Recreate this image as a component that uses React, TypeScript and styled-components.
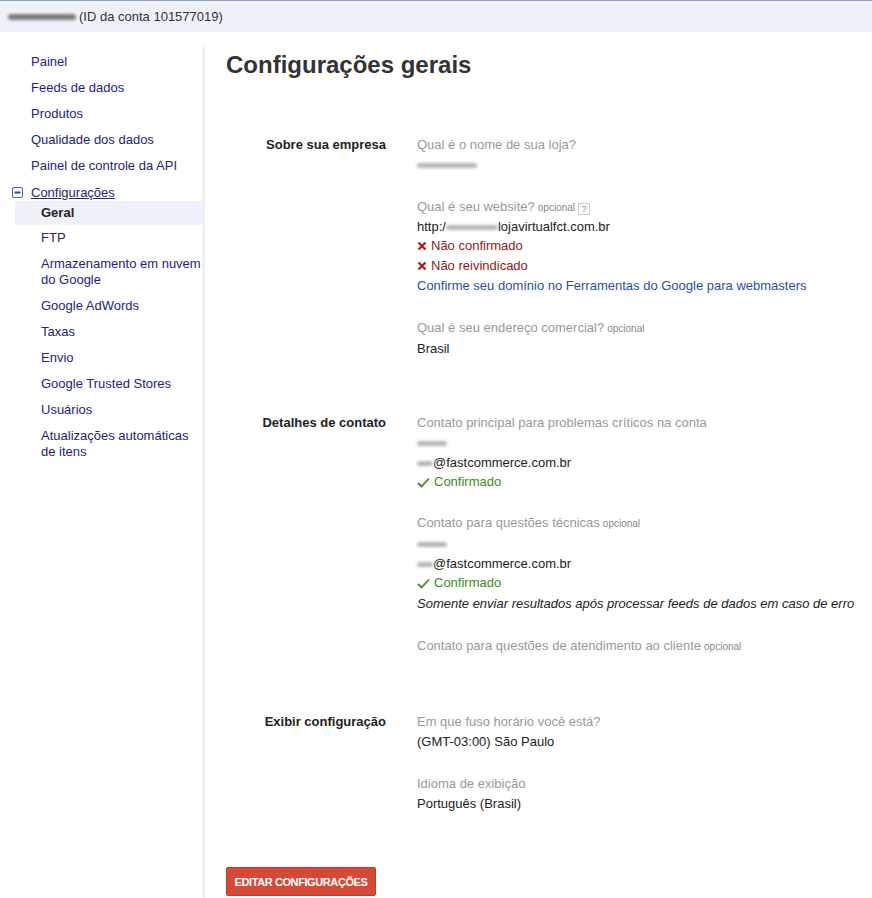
import React from 'react';
import styled, { createGlobalStyle } from 'styled-components';

const GlobalStyle = createGlobalStyle`
  html, body {
    margin: 0;
    padding: 0;
    background: #fff;
  }
  body {
    font-family: "Liberation Sans", Arial, sans-serif;
    font-size: 13px;
    color: #222;
  }
`;

const Page = styled.div`
  min-height: 100vh;
  display: flex;
  flex-direction: column;
`;

const TopBar = styled.div`
  height: 31px;
  border-top: 1px solid #8aa4c8;
  background: #eef1f9;
  display: flex;
  align-items: center;
  padding-left: 8px;
  gap: 3px;
  font-size: 13px;
  color: #333;
`;

const Blur = styled.span<{ w: number; h?: number; dark?: boolean }>`
  display: inline-block;
  width: ${(p) => p.w}px;
  height: ${(p) => p.h ?? 5}px;
  border-radius: 3px;
  background: ${(p) => (p.dark ? '#7a7a7a' : '#b5b5b5')};
  filter: blur(1.6px);
  vertical-align: middle;
`;

const Body = styled.div`
  flex: 1;
  display: flex;
  margin-top: 13px;
`;

const Sidebar = styled.nav`
  width: 205px;
  border-right: 3px solid #eceff6;
  padding: 6px 0 0 15px;
  box-sizing: border-box;
  flex-shrink: 0;
`;

const NavItem = styled.a<{ sub?: boolean; active?: boolean }>`
  display: block;
  padding: ${(p) => (p.active ? '4px' : '3px')} 0 ${(p) => (p.active ? '4px' : '3px')} ${(p) => (p.sub ? 26 : 16)}px;
  line-height: 16px;
  margin-bottom: ${(p) => (p.active ? '2px' : '4px')};
  color: ${(p) => (p.active ? '#222' : '#23237a')};
  font-weight: ${(p) => (p.active ? 'bold' : 'normal')};
  background: ${(p) => (p.active ? '#eef1f9' : 'transparent')};
  text-decoration: none;
  cursor: pointer;
`;

const GroupHead = styled.div`
  display: flex;
  align-items: center;
  gap: 8px;
  margin-left: -3px;
  line-height: 16px;
  padding-top: 3px;
  height: 20px;
  box-sizing: border-box;
  color: #23237a;
  a {
    color: #23237a;
    text-decoration: underline;
  }
`;

const Main = styled.main`
  flex: 1;
  padding: 6px 0 0 21px;
`;

const Title = styled.h1`
  margin: 0 0 56px;
  font-size: 24px;
  line-height: 28px;
  font-weight: bold;
  color: #333;
`;

const Section = styled.section`
  display: grid;
  grid-template-columns: 160px 1fr;
  column-gap: 31px;
  margin-bottom: 32px;
`;

const SectionLabel = styled.div`
  text-align: right;
  font-weight: bold;
  color: #222;
  line-height: 20px;
`;

const Field = styled.div`
  margin-bottom: 22px;
`;

const FieldLabel = styled.div`
  color: #999;
  line-height: 20px;
`;

const EmptyValue = styled.div`
  height: 1px;
`;

const Optional = styled.span`
  font-size: 10px;
  color: #888;
  margin-left: 3px;
`;

const Help = styled.span`
  display: inline-block;
  width: 10px;
  height: 10px;
  border: 1px solid #ccc;
  font-size: 9px;
  line-height: 10px;
  text-align: center;
  color: #888;
  margin-left: 3px;
  vertical-align: -1px;
`;

const Value = styled.div<{ italic?: boolean; compact?: boolean }>`
  line-height: ${(p) => (p.compact ? 18 : 20)}px;
  margin-top: ${(p) => (p.italic ? 2 : 0)}px;
  color: #222;
  font-style: ${(p) => (p.italic ? 'italic' : 'normal')};
  white-space: nowrap;
`;

const Status = styled.div<{ ok?: boolean }>`
  line-height: ${(p) => (p.ok ? 18 : 20)}px;
  color: ${(p) => (p.ok ? '#3d8a22' : '#8e1a1a')};
  display: flex;
  align-items: center;
  gap: 4px;
`;

const Link = styled.a`
  display: block;
  line-height: 20px;
  color: #2a4f9f;
  text-decoration: none;
`;

const Button = styled.button`
  margin-top: -1px;
  width: 150px;
  height: 29px;
  padding: 0;
  border: 1px solid #c53727;
  border-radius: 2px;
  background: #d44a36;
  color: #fff;
  font-family: "Liberation Sans", Arial, sans-serif;
  font-size: 11px;
  font-weight: bold;
  letter-spacing: -0.4px;
  white-space: nowrap;
  cursor: pointer;
`;

const Minus = () => (
  <svg width="11" height="11" viewBox="0 0 11 11">
    <rect x="0.5" y="0.5" width="10" height="10" rx="1.5" fill="#fff" stroke="#3d63b5" />
    <rect x="2.5" y="4.5" width="6" height="2" fill="#2b4f9e" />
  </svg>
);

const Cross = () => (
  <svg width="10" height="10" viewBox="0 0 10 10">
    <path d="M1.5 1.5 L8.5 8.5 M8.5 1.5 L1.5 8.5" stroke="#b01a1a" strokeWidth="2.2" />
  </svg>
);

const Check = () => (
  <svg width="13" height="11" viewBox="0 0 13 11">
    <path d="M1 6 L4.5 9.5 L12 1.5" stroke="#3d8a22" strokeWidth="1.8" fill="none" />
  </svg>
);

const nav = [
  'Painel',
  'Feeds de dados',
  'Produtos',
  'Qualidade dos dados',
  'Painel de controle da API',
];

const subNav = [
  'FTP',
  'Armazenamento em nuvem do Google',
  'Google AdWords',
  'Taxas',
  'Envio',
  'Google Trusted Stores',
  'Usuários',
  'Atualizações automáticas de itens',
];

export default function App() {
  return (
    <Page>
      <GlobalStyle />
      <TopBar>
        <Blur w={68} h={6} dark />
        <span>(ID da conta 101577019)</span>
      </TopBar>
      <Body>
        <Sidebar>
          {nav.map((n) => (
            <NavItem key={n}>{n}</NavItem>
          ))}
          <GroupHead>
            <Minus />
            <a>Configurações</a>
          </GroupHead>
          <NavItem sub active>Geral</NavItem>
          {subNav.map((n) => (
            <NavItem sub key={n}>{n}</NavItem>
          ))}
        </Sidebar>
        <Main>
          <Title>Configurações gerais</Title>

          <Section>
            <SectionLabel>Sobre sua empresa</SectionLabel>
            <div>
              <Field>
                <FieldLabel>Qual é o nome de sua loja?</FieldLabel>
                <Value><Blur w={60} /></Value>
              </Field>
              <Field>
                <FieldLabel>
                  Qual é seu website?<Optional>opcional</Optional><Help>?</Help>
                </FieldLabel>
                <Value compact>
                  http:/<Blur w={52} />lojavirtualfct.com.br
                </Value>
                <Status><Cross />Não confirmado</Status>
                <Status><Cross />Não reivindicado</Status>
                <Link>Confirme seu domínio no Ferramentas do Google para webmasters</Link>
              </Field>
              <Field>
                <FieldLabel>
                  Qual é seu endereço comercial?<Optional>opcional</Optional>
                </FieldLabel>
                <Value>Brasil</Value>
              </Field>
            </div>
          </Section>

          <Section>
            <SectionLabel>Detalhes de contato</SectionLabel>
            <div>
              <Field>
                <FieldLabel>Contato principal para problemas críticos na conta</FieldLabel>
                <Value><Blur w={30} /></Value>
                <Value><Blur w={16} />@fastcommerce.com.br</Value>
                <Status ok><Check />Confirmado</Status>
              </Field>
              <Field>
                <FieldLabel>
                  Contato para questões técnicas<Optional>opcional</Optional>
                </FieldLabel>
                <Value><Blur w={30} /></Value>
                <Value><Blur w={16} />@fastcommerce.com.br</Value>
                <Status ok><Check />Confirmado</Status>
                <Value italic>Somente enviar resultados após processar feeds de dados em caso de erro</Value>
              </Field>
              <Field>
                <FieldLabel>
                  Contato para questões de atendimento ao cliente<Optional>opcional</Optional>
                </FieldLabel>
                <EmptyValue />
              </Field>
            </div>
          </Section>

          <Section>
            <SectionLabel>Exibir configuração</SectionLabel>
            <div>
              <Field>
                <FieldLabel>Em que fuso horário você está?</FieldLabel>
                <Value>(GMT-03:00) São Paulo</Value>
              </Field>
              <Field>
                <FieldLabel>Idioma de exibição</FieldLabel>
                <Value>Português (Brasil)</Value>
              </Field>
            </div>
          </Section>

          <Button>EDITAR CONFIGURAÇÕES</Button>
        </Main>
      </Body>
    </Page>
  );
}
